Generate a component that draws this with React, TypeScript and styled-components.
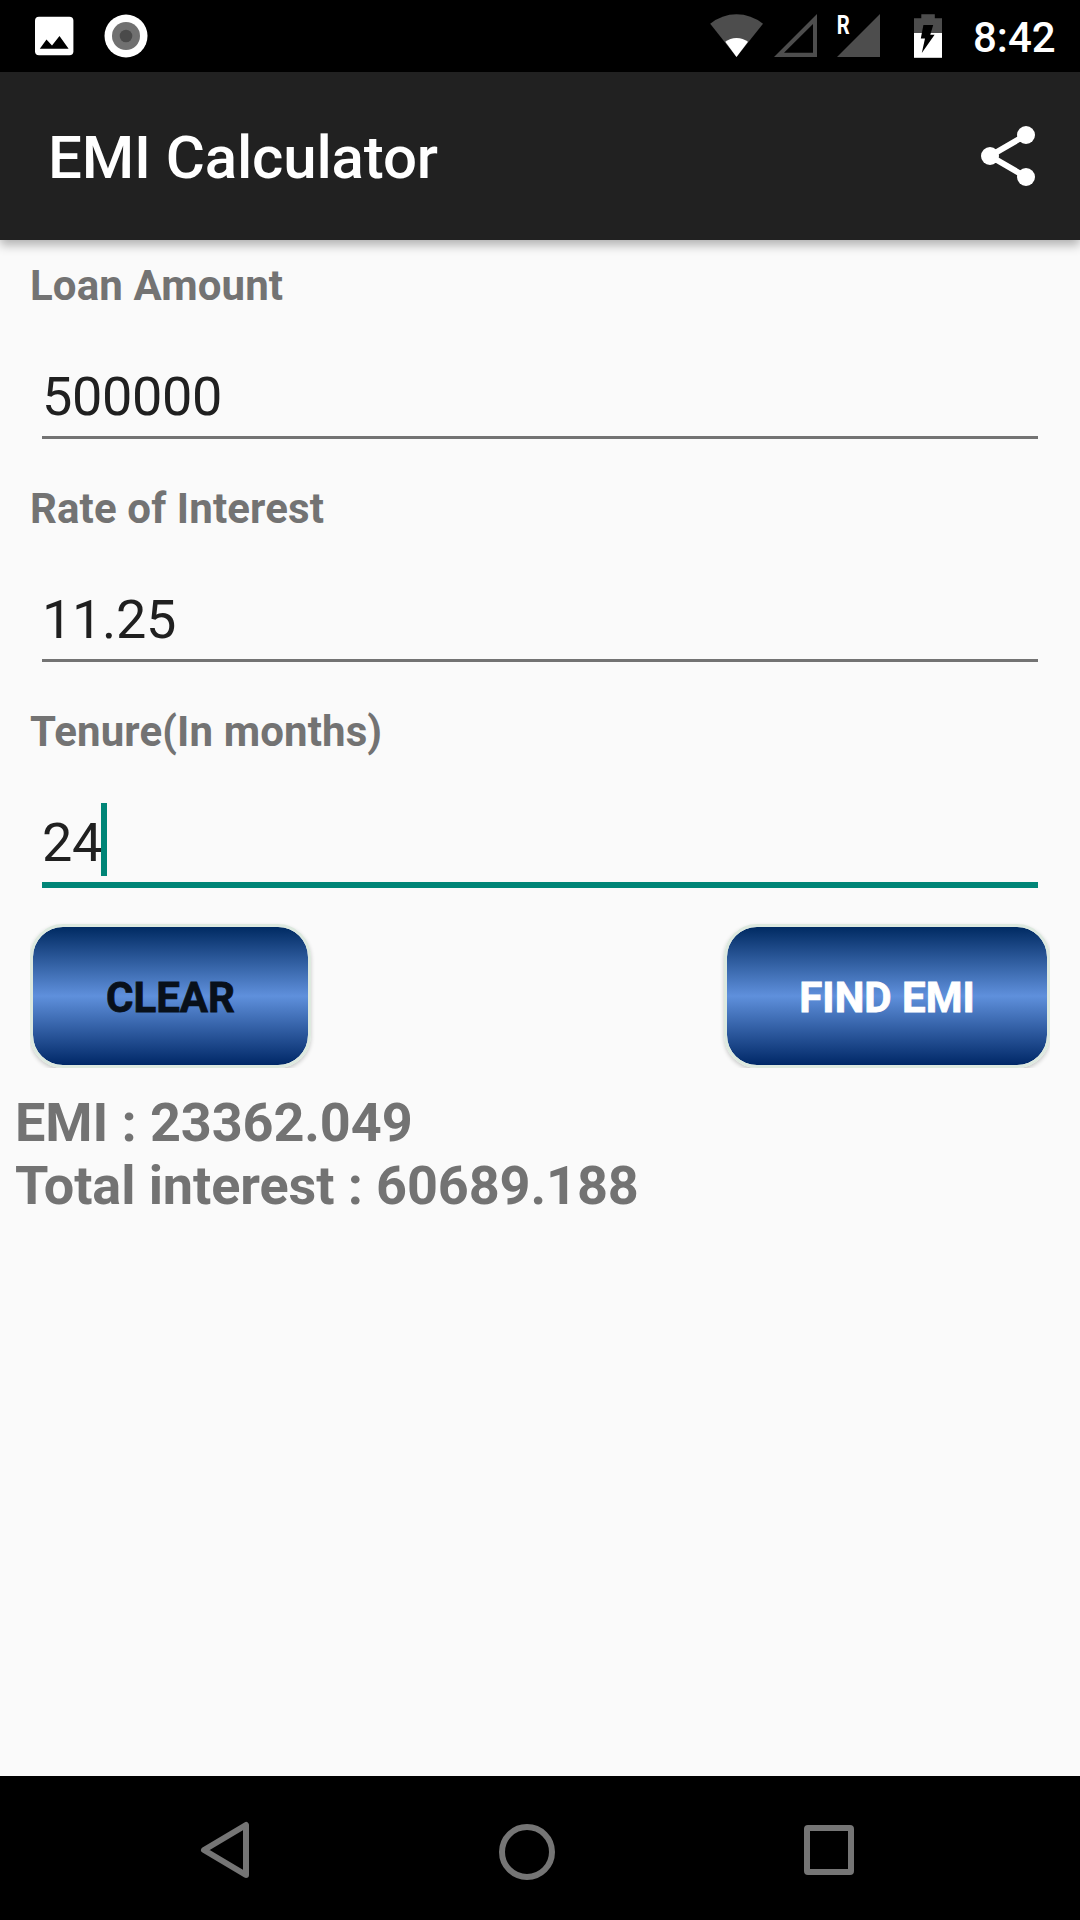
import React from "react";
import styled, { createGlobalStyle } from "styled-components";

const Global = createGlobalStyle`
  * { box-sizing: border-box; }
  body { margin: 0; background: #fafafa; font-family: Roboto, "Noto Sans", sans-serif; }
  svg { display: block; flex: none; }
`;

const Screen = styled.div`
  width: 1080px;
  height: 1920px;
  display: flex;
  flex-direction: column;
  background: #fafafa;
  overflow: hidden;
`;

const StatusBar = styled.div`
  height: 72px;
  flex: none;
  display: flex;
  justify-content: space-between;
  background: #000;
  padding: 0 24px 0 30px;
`;

const StatusGroup = styled.div`
  display: flex;
`;

const Clock = styled.span`
  margin-left: 24px;
  padding-top: 13px;
  width: 83px;
  font-size: 42px;
  line-height: 49px;
  font-weight: 500;
  color: #fff;
  white-space: nowrap;
`;

const AppBar = styled.header`
  height: 168px;
  flex: none;
  display: flex;
  align-items: center;
  justify-content: space-between;
  padding: 0 36px 0 48px;
  background: #212121;
  box-shadow: 0 5px 10px rgba(0, 0, 0, 0.3);
`;

const Title = styled.h1`
  margin: 0;
  padding-top: 4px;
  font-size: 60px;
  line-height: 70px;
  font-weight: 500;
  letter-spacing: -0.15px;
  color: #fff;
`;

const Main = styled.main`
  flex: 1;
  display: flex;
  flex-direction: column;
  padding: 21px 15px 0;
`;

const Form = styled.section`
  display: flex;
  flex-direction: column;
  gap: 45px;
  padding: 0 15px;
`;

const Field = styled.div`
  display: flex;
  flex-direction: column;
  gap: 55px;
`;

const Label = styled.label`
  font-size: 42px;
  line-height: 49px;
  font-weight: 700;
  letter-spacing: 0.12px;
  color: #737373;
`;

const Value = styled.div<{ $active?: boolean }>`
  display: flex;
  align-items: flex-start;
  margin: 0 12px;
  height: ${(p) => (p.$active ? 77 : 74)}px;
  border-bottom: ${(p) => (p.$active ? "6px solid #008577" : "3px solid #737373")};
  font-size: 54px;
  line-height: 63px;
  letter-spacing: -0.33px;
  color: #202020;
`;

const Caret = styled.span`
  width: 6px;
  height: 73px;
  margin: -8px 0 0 -1px;
  background: #008577;
`;

const Actions = styled.div`
  display: flex;
  justify-content: space-between;
  margin: 36px 15px 0;
  clip-path: inset(-12px 0 0 0);
`;

const Button = styled.button<{ $width: number; $color: string }>`
  width: ${(p) => p.$width}px;
  height: 144px;
  padding: 2px 0 0;
  border: 3px solid #dde9df;
  border-radius: 33px;
  background: linear-gradient(#002a62, #5f90dc 50%, #002867) padding-box;
  box-shadow: 0 2px 4px rgba(0, 0, 0, 0.2);
  font-family: inherit;
  font-size: 42px;
  line-height: 49px;
  font-weight: 700;
  -webkit-text-stroke: 0.8px ${(p) => p.$color};
  color: ${(p) => p.$color};
`;

const Results = styled.div`
  margin-top: 23px;
  font-size: 54px;
  line-height: 63px;
  font-weight: 700;
  letter-spacing: -0.1px;
  color: #737373;
`;

const NavBar = styled.nav`
  height: 144px;
  flex: none;
  display: flex;
  padding-left: 74px;
  background: #000;
`;

const NavCell = styled.div`
  width: 302px;
  display: flex;
  align-items: center;
  justify-content: center;
`;

const Notifications = () => (
  <svg width="130" height="72" viewBox="30 0 130 72">
    <rect x="35" y="16.7" width="38.4" height="38.6" rx="4" fill="#fff" />
    <path d="M39.8 48.8L46.5 39.4L52 45.5L59.5 36L68.6 48.8Z" fill="#000" />
    <circle cx="126" cy="36" r="21.5" fill="#fff" />
    <circle cx="126" cy="36" r="14" fill="#707070" />
    <circle cx="126" cy="36" r="6.3" fill="#4a4a4a" />
  </svg>
);

const SystemIcons = () => (
  <svg width="249" height="72" viewBox="700 0 249 72">
    <path d="M736.5 57L710.2 23.7Q722 14.2 736.5 14.2T763 23.7Z" fill="#4d4d4d" />
    <path d="M736.5 57L725.3 41.8Q730 38 736.5 38T748 41.8Z" fill="#fff" />
    <path d="M774 57H817V14ZM784 52.8L813 24V52.8Z" fill="#4d4d4d" fillRule="evenodd" />
    <path d="M837 57H880V14Z" fill="#4d4d4d" />
    <text x="836.7" y="33.5" textLength="13" lengthAdjust="spacingAndGlyphs" fontFamily="Roboto" fontWeight="700" fontSize="25.5" fill="#fff">R</text>
    <path d="M914 33V18.3H921.3V14.3H934.8V18.3H942V33Z" fill="#4d4d4d" />
    <path d="M914 33H942V57.8H914Z" fill="#fff" />
    <path d="M923.4 25H933.2L930.3 34.8H934.6L921.8 53L925 38.4H920.8Z" fill="#000" />
  </svg>
);

const ShareIcon = () => (
  <svg width="72" height="72" viewBox="972 120 72 72">
    <path d="M1026 135L990 156L1026 177" fill="none" stroke="#fff" strokeWidth="6" />
    <circle cx="1026" cy="135" r="9" fill="#fff" />
    <circle cx="990" cy="156" r="9" fill="#fff" />
    <circle cx="1026" cy="177" r="9" fill="#fff" />
  </svg>
);

const NavIcon = ({ children }: { children: React.ReactNode }) => (
  <svg width="96" height="96" viewBox="-48 -48 96 96" fill="none" stroke="#757575" strokeWidth="6" strokeLinejoin="round">
    {children}
  </svg>
);

const fields = [
  { label: "Loan Amount", value: "500000" },
  { label: "Rate of Interest", value: "11.25" },
  { label: "Tenure(In months)", value: "24", active: true },
];

export default function App() {
  return (
    <Screen>
      <Global />
      <StatusBar>
        <StatusGroup>
          <Notifications />
        </StatusGroup>
        <StatusGroup>
          <SystemIcons />
          <Clock>8:42</Clock>
        </StatusGroup>
      </StatusBar>
      <AppBar>
        <Title>EMI Calculator</Title>
        <ShareIcon />
      </AppBar>
      <Main>
        <Form>
          {fields.map((f) => (
            <Field key={f.label}>
              <Label>{f.label}</Label>
              <Value $active={f.active}>
                {f.value}
                {f.active && <Caret />}
              </Value>
            </Field>
          ))}
        </Form>
        <Actions>
          <Button $width={281} $color="#08101a">CLEAR</Button>
          <Button $width={326} $color="#fff">FIND EMI</Button>
        </Actions>
        <Results>
          <div>EMI : 23362.049</div>
          <div>Total interest : 60689.188</div>
        </Results>
      </Main>
      <NavBar>
        <NavCell>
          <NavIcon>
            <path d="M-21 2L21 -23V27Z" />
          </NavIcon>
        </NavCell>
        <NavCell>
          <NavIcon>
            <circle cx="0" cy="4" r="25" />
          </NavIcon>
        </NavCell>
        <NavCell>
          <NavIcon>
            <rect x="-22" y="-20" width="44" height="44" rx="1" />
          </NavIcon>
        </NavCell>
      </NavBar>
    </Screen>
  );
}
